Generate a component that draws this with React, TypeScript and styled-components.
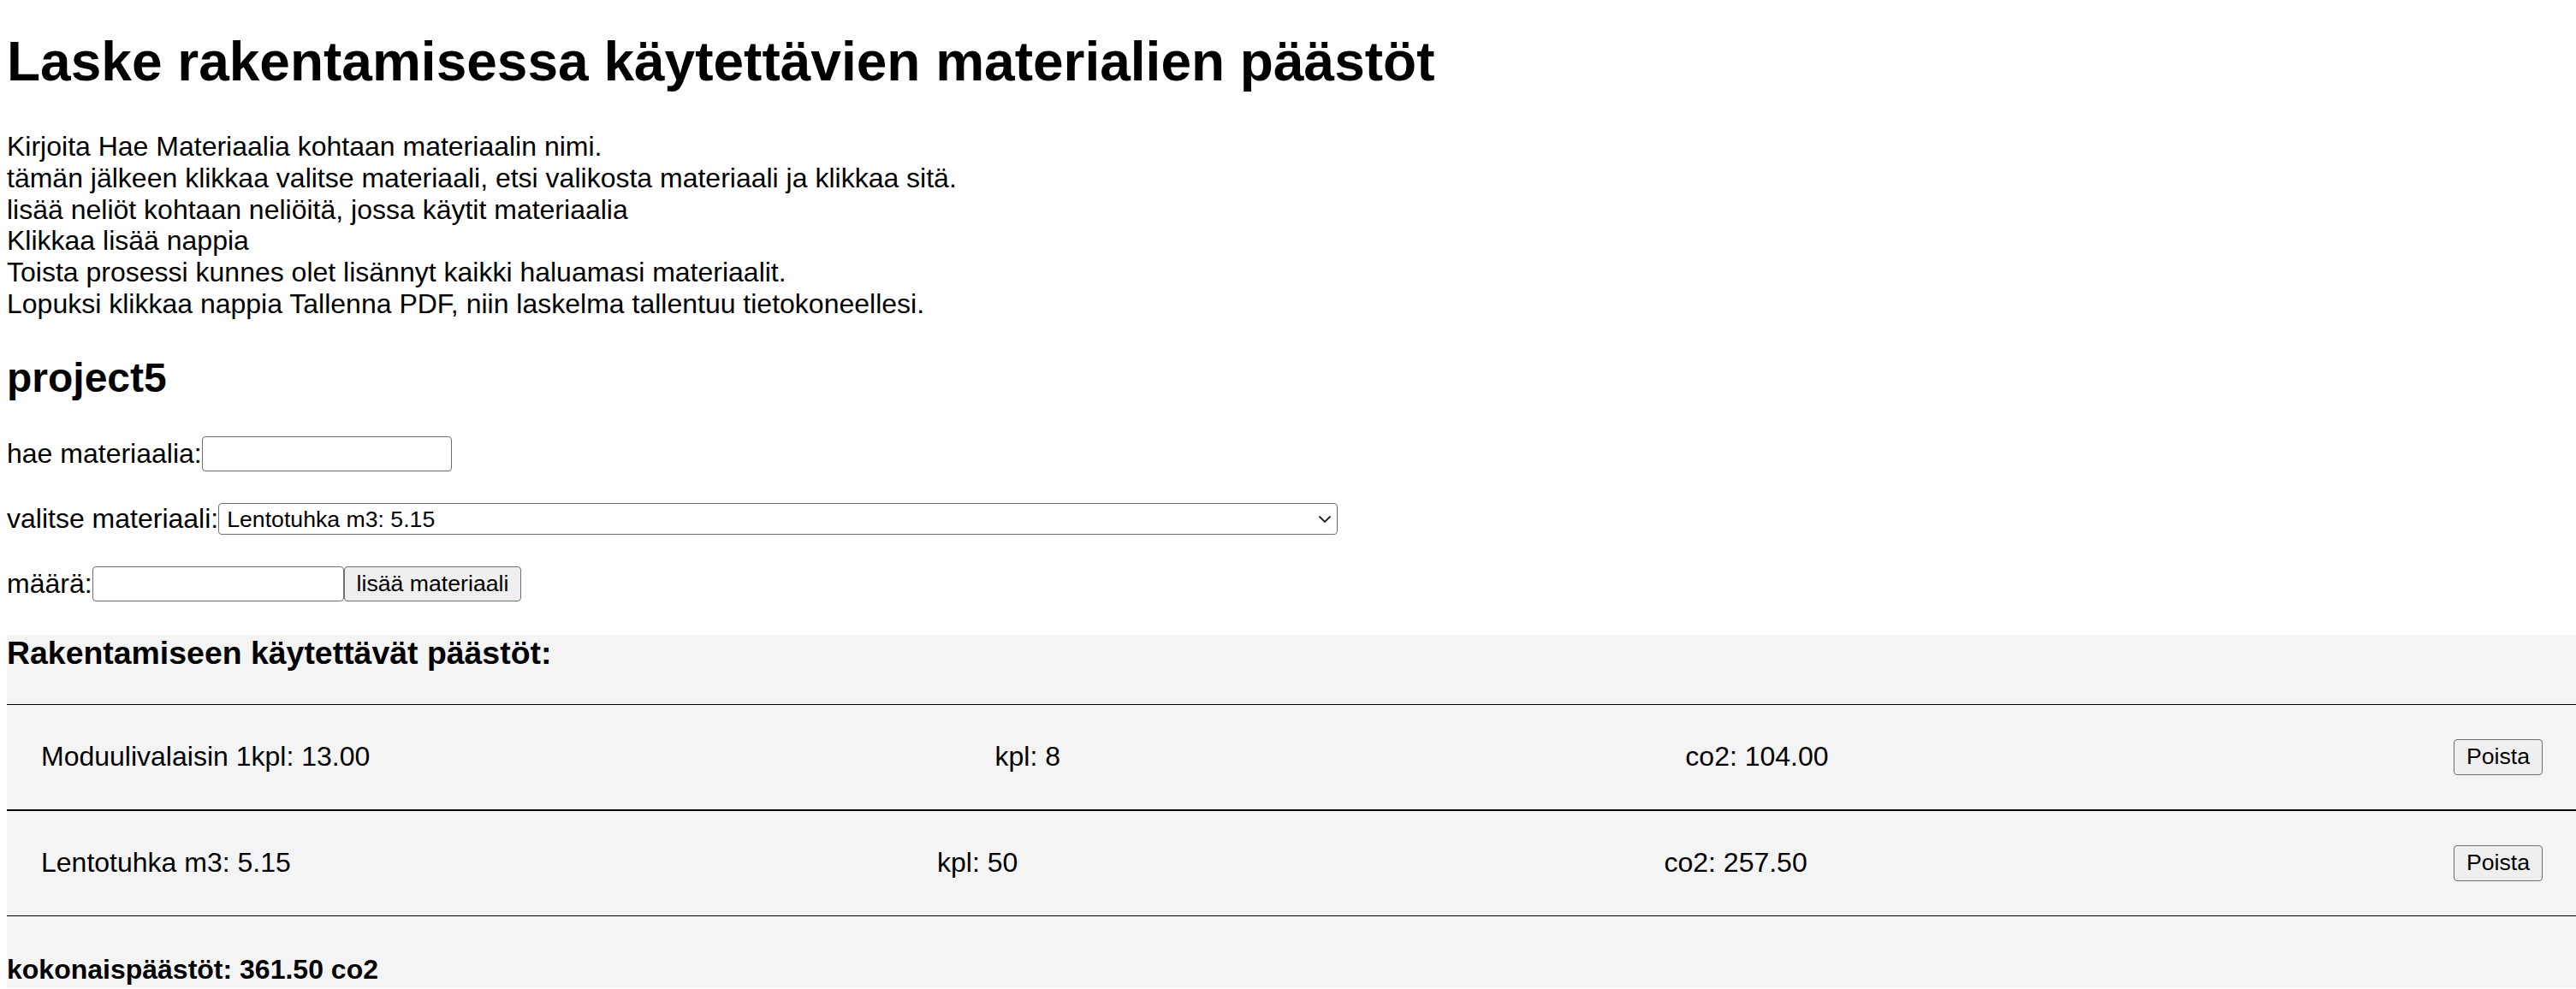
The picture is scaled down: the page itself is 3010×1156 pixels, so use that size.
import React from "react";
import styled, { createGlobalStyle } from "styled-components";

const GlobalStyle = createGlobalStyle`
  html, body {
    margin: 0;
    padding: 0;
    background: #ffffff;
  }
  body {
    font-family: "Liberation Sans", Arial, Helvetica, sans-serif;
    font-size: 32px;
    color: #000000;
  }
`;

const Page = styled.div`
  display: flex;
  flex-direction: column;
  padding-left: 8px;
`;

const Title = styled.h1`
  margin: 35px 0 0 0;
  font-size: 64px;
  line-height: 74px;
  font-weight: 700;
`;

const Instructions = styled.p`
  margin: 44px 0 0 0;
  font-size: 32px;
  line-height: 36.8px;
`;

const ProjectName = styled.h2`
  margin: 40px 0 0 0;
  font-size: 48px;
  line-height: 55px;
  font-weight: 700;
`;

const Form = styled.div`
  margin-top: 40px;
  display: flex;
  flex-direction: column;
  gap: 32px;
`;

const FormRow = styled.div`
  display: flex;
  align-items: center;
  height: 44px;
`;

const FieldLabel = styled.label`
  font-size: 32px;
  line-height: 36.8px;
  white-space: nowrap;
`;

const TextInput = styled.input<{ $width: number }>`
  box-sizing: border-box;
  width: ${(p) => p.$width}px;
  height: 41px;
  margin: 0;
  padding: 2px 6px;
  font-family: "Liberation Sans", Arial, Helvetica, sans-serif;
  font-size: 26.67px;
  border: 1px solid #6f6f6f;
  border-radius: 4px;
  background: #ffffff;
`;

const SelectWrap = styled.div`
  position: relative;
  display: inline-flex;
`;

const MaterialSelect = styled.select`
  box-sizing: border-box;
  appearance: none;
  -webkit-appearance: none;
  width: 1308px;
  height: 37px;
  margin: 0;
  padding: 0 30px 0 9px;
  font-family: "Liberation Sans", Arial, Helvetica, sans-serif;
  font-size: 26.67px;
  color: #000000;
  border: 1px solid #6f6f6f;
  border-radius: 4px;
  background: #ffffff;
`;

const Chevron = styled.svg`
  position: absolute;
  right: 7px;
  top: 50%;
  width: 16px;
  height: 10px;
  margin-top: -5px;
  pointer-events: none;
`;

const Button = styled.button<{ $height: number }>`
  box-sizing: border-box;
  height: ${(p) => p.$height}px;
  margin: 0;
  padding: 0 14px;
  font-family: "Liberation Sans", Arial, Helvetica, sans-serif;
  font-size: 26.67px;
  color: #000000;
  background: #efefef;
  border: 1px solid #6f6f6f;
  border-radius: 4px;
  white-space: nowrap;
`;

const EmissionsSection = styled.section`
  margin-top: 37px;
  padding-bottom: 4px;
  background: #f4f4f4;
  display: flex;
  flex-direction: column;
`;

const SectionTitle = styled.h3`
  margin: 0 0 38px 0;
  font-size: 37.44px;
  line-height: 43px;
  font-weight: 700;
`;

const ItemRow = styled.div`
  display: flex;
  justify-content: space-between;
  align-items: center;
  padding: 40px 39px 40px 40px;
  border-top: 1px solid #000000;
  border-bottom: 1px solid #000000;
`;

const ItemCell = styled.span`
  font-size: 32px;
  line-height: 36.8px;
  white-space: nowrap;
`;

const TotalLine = styled.h4`
  margin: 44px 0 0 0;
  font-size: 32px;
  line-height: 36px;
  font-weight: 700;
`;

const instructionLines = [
  "Kirjoita Hae Materiaalia kohtaan materiaalin nimi.",
  "tämän jälkeen klikkaa valitse materiaali, etsi valikosta materiaali ja klikkaa sitä.",
  "lisää neliöt kohtaan neliöitä, jossa käytit materiaalia",
  "Klikkaa lisää nappia",
  "Toista prosessi kunnes olet lisännyt kaikki haluamasi materiaalit.",
  "Lopuksi klikkaa nappia Tallenna PDF, niin laskelma tallentuu tietokoneellesi.",
];

const items = [
  { name: "Moduulivalaisin 1kpl: 13.00", count: 8, co2: "104.00" },
  { name: "Lentotuhka m3: 5.15", count: 50, co2: "257.50" },
];

export default function App() {
  return (
    <>
      <GlobalStyle />
      <Page>
        <Title>Laske rakentamisessa käytettävien materialien päästöt</Title>
        <Instructions>
          {instructionLines.map((line, i) => (
            <React.Fragment key={i}>
              {line}
              {i < instructionLines.length - 1 && <br />}
            </React.Fragment>
          ))}
        </Instructions>
        <ProjectName>project5</ProjectName>
        <Form>
          <FormRow>
            <FieldLabel htmlFor="search">hae materiaalia:</FieldLabel>
            <TextInput id="search" type="text" $width={292} />
          </FormRow>
          <FormRow>
            <FieldLabel htmlFor="material">valitse materiaali:</FieldLabel>
            <SelectWrap>
              <MaterialSelect id="material" defaultValue="lentotuhka">
                <option value="lentotuhka">Lentotuhka m3: 5.15</option>
                <option value="moduuli">Moduulivalaisin 1kpl: 13.00</option>
              </MaterialSelect>
              <Chevron viewBox="0 0 16 10" aria-hidden="true">
                <path d="M1.5 1.5 L8 8 L14.5 1.5" fill="none" stroke="#1f1f1f" strokeWidth="1.8" />
              </Chevron>
            </SelectWrap>
          </FormRow>
          <FormRow>
            <FieldLabel htmlFor="amount">määrä:</FieldLabel>
            <TextInput id="amount" type="text" $width={294} />
            <Button $height={41}>lisää materiaali</Button>
          </FormRow>
        </Form>
        <EmissionsSection>
          <SectionTitle>Rakentamiseen käytettävät päästöt:</SectionTitle>
          {items.map((item) => (
            <ItemRow key={item.name}>
              <ItemCell>{item.name}</ItemCell>
              <ItemCell>kpl: {item.count}</ItemCell>
              <ItemCell>co2: {item.co2}</ItemCell>
              <Button $height={42}>Poista</Button>
            </ItemRow>
          ))}
          <TotalLine>kokonaispäästöt: 361.50 co2</TotalLine>
        </EmissionsSection>
      </Page>
    </>
  );
}
